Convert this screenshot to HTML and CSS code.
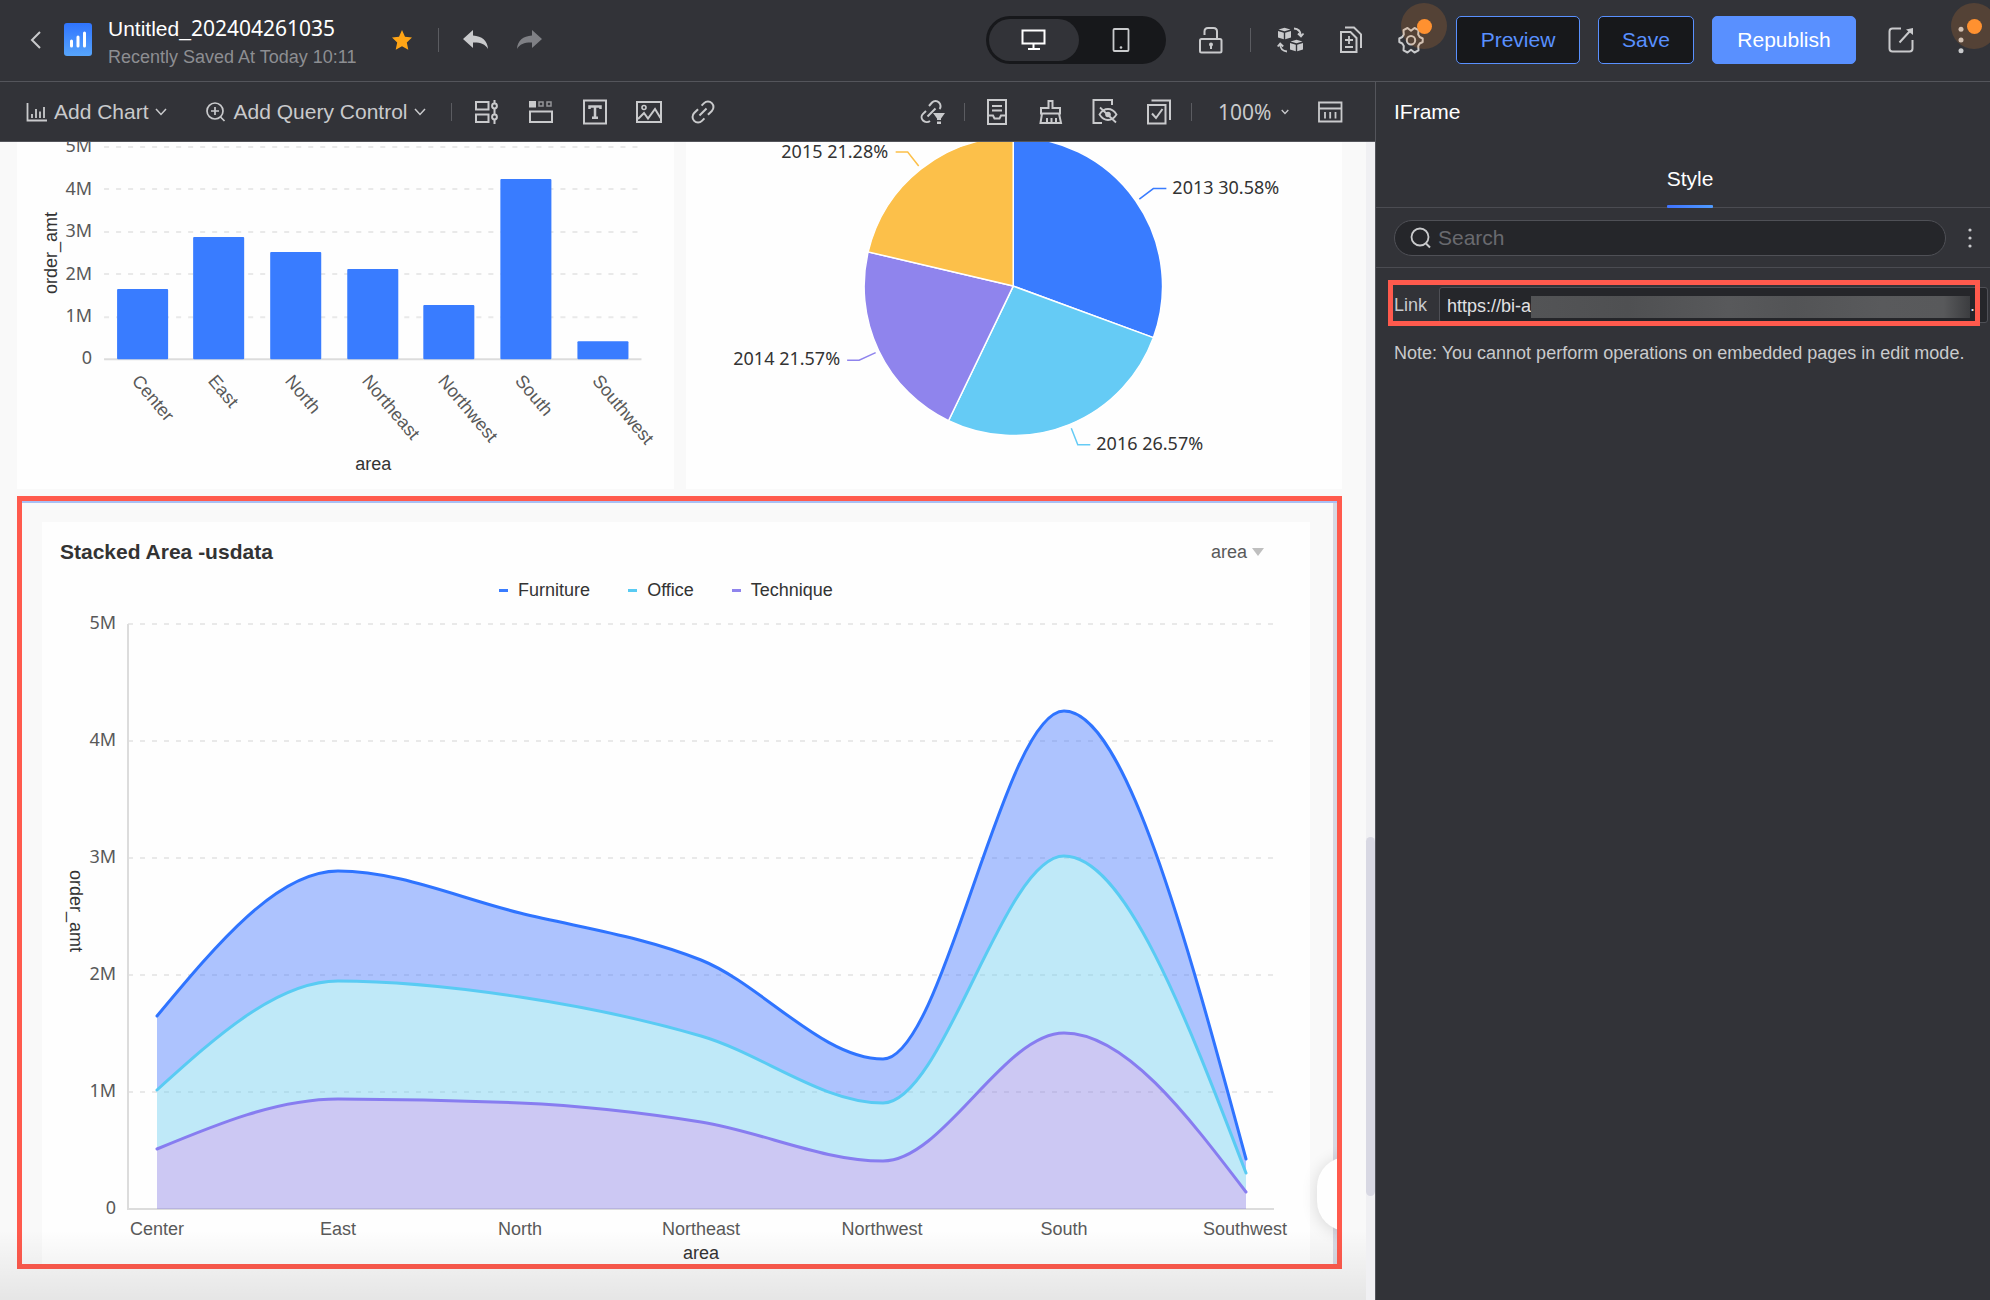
FILE: index.html
```html
<!DOCTYPE html>
<html lang="en">
<head>
<meta charset="utf-8">
<title>Untitled_202404261035</title>
<link rel="stylesheet" href="styles.css">
</head>
<body>
<div class="app">
  <header class="topbar">
    <button class="icon-btn back" aria-label="Back"><svg width="12" height="20" viewBox="0 0 12 20"><path d="M10 2 2 10l8 8" class="line"/></svg></button>
    <svg class="logo" width="28" height="34" viewBox="0 0 28 34" aria-hidden="true"><defs><linearGradient id="lg" x1="0" y1="0" x2="0" y2="1"><stop offset="0" stop-color="#2f74ff"/><stop offset="1" stop-color="#57a5fb"/></linearGradient></defs><rect width="28" height="33" rx="3" fill="url(#lg)"/><path d="M7.500 18v5M14 14v9M20.500 10v13" stroke="#fff" stroke-width="3" stroke-linecap="round"/></svg>
    <div class="doc">
      <h1 class="doc-name">Untitled_<span class="digits">202404261035</span></h1>
      <p class="doc-saved">Recently Saved At Today 10:11</p>
    </div>
    <button class="icon-btn star" aria-label="Favorite"><svg width="20" height="20" viewBox="0 0 20 20"><path d="M10 0l3 6.800 7 .8-5.200 4.900 1.500 7.200L10 16.300l-6.300 3.400 1.500-7.200L0 7.600l7-.8z" fill="#ffa516"/></svg></button>
    <span class="divider"></span>
    <button class="icon-btn undo" aria-label="Undo"><svg width="26" height="20" viewBox="0 0 26 20"><path d="M10 0v5.500c9 .5 14.500 5 15 13.500C22 14 17.500 12.300 10 12.500V18L0 9z" fill="#c9cacc"/></svg></button>
    <button class="icon-btn redo" aria-label="Redo"><svg width="26" height="20" viewBox="0 0 26 20"><path d="M15 0v5.500C6 6 .5 10.500 0 19c3-5 7.500-6.700 15-6.500V18l10-9z" fill="#7f8085"/></svg></button>

    <div class="device" role="group" aria-label="Layout">
      <button class="device-btn active" aria-label="Desktop"><svg width="26" height="22" viewBox="0 0 26 22"><path d="M1.500 1.500h22v13h-22zM12.500 15v4M7 20h12" fill="none" stroke="#fff"/></svg></button>
      <button class="device-btn" aria-label="Phone"><svg width="18" height="26" viewBox="0 0 18 26"><rect x="1.500" y="2" width="15" height="22" rx="1" class="line" stroke-width="1.800"/><circle cx="9" cy="20.500" r="1.300" class="solid"/></svg></button>
    </div>
    <button class="icon-btn lock" aria-label="Lock"><svg width="26" height="28" viewBox="0 0 26 28"><rect x="2" y="13" width="21.500" height="13.500" rx="1.500" class="line"/><path d="M6.500 9V5.500Q6.500 2 10 2h5.500Q19 2 19 5.500V13M13 20v3" class="line"/><circle cx="13" cy="18.500" r="2" class="solid"/></svg></button>
    <span class="divider d2"></span>
    <button class="icon-btn swap" aria-label="Swap component"><svg width="26" height="26" viewBox="0 0 26 26"><path d="M6.500.7l6 1.800-6 1.800-6-1.800zM0 4l5.800 1.800v6.400L0 10.400zM13 4 7.200 5.800v6.400L13 10.400zM18.500 12.700l6 1.800-6 1.800-6-1.800zM12 16l5.800 1.800v6.400L12 22.400zM25 16l-5.800 1.800v6.400L25 22.400z" class="solid"/><path d="M16 1.500c4 .3 6.700 3 7 7.500M9 24.500c-4-.3-6.700-3-7-7.500M20 6.500l3 3 2.500-3M-.3 19.500l2.500-3 3 3" class="line" stroke-width="1.800"/></svg></button>
    <button class="icon-btn" aria-label="Versions"><svg width="26" height="28" viewBox="0 0 26 28"><path d="M3 6h9.500l6 6v14H3zM7 1.500h9L23 8.300V22" class="line"/><path d="M11 10v8M7 14h8M7 21h8" class="line" stroke-width="1.800"/></svg></button>
    <button class="icon-btn badge" aria-label="Settings"><svg width="26" height="26" viewBox="0 0 26 26"><path d="M13 3.800 16.500 1l4 2.200-.3 4.300 1.500 2.500 3 1.500v3.500l-3 1.500-1.500 2.500.3 4.300-4 2.200-3.500-2.800L9.500 25.500l-4-2.200.3-4.300-1.500-2.500-3-1.500v-3.500l3-1.500 1.500-2.500-.3-4.300L9.500 1z" class="line" stroke-linejoin="round"/><circle cx="13" cy="13.200" r="4.200" class="line"/></svg></button>
    <button class="btn preview">Preview</button>
    <button class="btn save">Save</button>
    <button class="btn republish">Republish</button>
    <button class="icon-btn share" aria-label="Open"><svg width="26" height="26" viewBox="0 0 26 26"><path d="M13 1.500H4.500q-3 0-3 3v17q0 3 3 3h17q3 0 3-3V13M11.500 15.500 22 4" class="line"/><path d="M25 1v7l-7-5.500z" class="solid"/></svg></button>
    <button class="icon-btn badge more" aria-label="More"><svg width="26" height="26" viewBox="0 0 26 26"><g class="solid"><circle cx="13" cy="2.300" r="2.500"/><circle cx="13" cy="13" r="2.500"/><circle cx="13" cy="23.700" r="2.500"/></g></svg></button>
  </header>

  <nav class="toolbar">
    <button class="menu-btn"><svg width="22" height="20" viewBox="0 0 22 20"><path d="M1.500 1v17.500H21M6 16v-4M10 16V7M14 16V9.500M18 16V5" class="line" stroke-width="1.800"/></svg>Add Chart<svg class="caret" width="12" height="8" viewBox="0 0 12 8"><path d="M1 1l5 5.500L11 1" class="line" stroke-width="1.500"/></svg></button>
    <button class="menu-btn query"><svg width="22" height="22" viewBox="0 0 22 22"><circle cx="10" cy="10" r="8" class="line" stroke-width="1.700"/><path d="M10 6v8M6 10h8M15.500 16l4 4" class="line" stroke-width="1.700"/></svg>Add Query Control<svg class="caret" width="12" height="8" viewBox="0 0 12 8"><path d="M1 1l5 5.500L11 1" class="line" stroke-width="1.500"/></svg></button>
    <span class="divider short"></span>
    <div class="tools">
      <button class="icon-btn" aria-label="Filter group"><svg width="26" height="26" viewBox="0 0 26 26"><path d="M2 3h12.500v7.500H2zM2 15.500h12.500V23H2zM20.500 1v4M20.500 9v7M20.500 20v5" class="line"/><circle cx="20.500" cy="7" r="2.400" class="line"/><circle cx="20.500" cy="18" r="2.400" class="line"/></svg></button>
      <button class="icon-btn" aria-label="Tabs"><svg width="26" height="26" viewBox="0 0 26 26"><path d="M1 2h7v6.500H1z" class="solid"/><path d="M11 3h4v4h-4zM19 3h4v4h-4z" class="line" stroke-width="1.500" opacity=".65"/><path d="M2 12.500h22V23H2z" class="line"/></svg></button>
      <button class="icon-btn" aria-label="Text"><svg width="26" height="26" viewBox="0 0 26 26"><path d="M2 1.500h22v23H2z" class="line"/><path d="M7.500 10V7.500h11V10M13 7.500v11M10 18.800h6" class="line" stroke-width="2.500"/></svg></button>
      <button class="icon-btn" aria-label="Image"><svg width="26" height="26" viewBox="0 0 26 26"><path d="M1 3h24v20H1zM2 20l6-6 4 5.500L19 10l5.500 9" class="line"/><circle cx="8" cy="8.500" r="2" class="line" stroke-width="1.600"/></svg></button>
      <button class="icon-btn" aria-label="Embed page"><svg width="26" height="26" viewBox="0 0 26 26"><path d="M9.500 18.500H6a5.500 5.500 0 0 1 0-11h5.500M16.500 7.500H20a5.500 5.500 0 0 1 0 11h-5.500M8 13h10" class="line" transform="rotate(-45 13 13)"/></svg></button>
    </div>
    <div class="tools end">
      <button class="icon-btn" aria-label="Linkage"><svg width="26" height="26" viewBox="0 0 26 26"><path d="M11 22c-2 1.500-5 1.500-7-.5s-1.800-4.800 0-6.600L7 12M10 7l3-3.500c2-2 5-2 7 0s2 5 .5 6.500M8.500 17.500l8-8" class="line"/><path d="M14 14h12l-4 5.500V21h-4v-1.500zM18 22.500h4V25h-4z" class="solid"/></svg></button>
      <span class="divider short"></span>
      <button class="icon-btn" aria-label="Template"><svg width="26" height="26" viewBox="0 0 26 26"><path d="M4 .9h18v24H4zM4 16.500h5l1.500 3h5l1.500-3h5M8 7h10M8 11.500h10" class="line"/></svg></button>
      <button class="icon-btn" aria-label="Theme"><svg width="26" height="26" viewBox="0 0 26 26"><path d="M3 14.500V9h7.500V2h4v7H22v5.500zM4 14.500 2.500 24H23l-2-9.500M9 24v-5M13.500 24v-5M18 24v-5" class="line"/></svg></button>
      <button class="icon-btn" aria-label="Hidden items"><svg width="26" height="26" viewBox="0 0 26 26"><path d="M10 24H1.500V1H20v5" class="line"/><path d="M7.500 15.500Q11 10 16 10t8.500 5.500Q21 21 16 21t-8.500-5.500zM8 8.500l16 15" class="line" stroke-width="1.800"/><circle cx="16" cy="15.500" r="2.800" class="solid"/></svg></button>
      <button class="icon-btn" aria-label="Batch select"><svg width="26" height="26" viewBox="0 0 26 26"><path d="M2 6h17.500v18.500H2zM5.500 1.500H24V21M6 14.500l4 4.500 6.500-9" class="line"/></svg></button>
      <span class="divider short"></span>
      <span class="zoom"><select class="zoom-select" aria-label="Zoom"><option>100%</option></select><svg width="8" height="6" viewBox="0 0 8 6"><path d="M.7 1 4 4.500 7.300 1" class="line" stroke-width="1.300"/></svg></span>
      <button class="icon-btn" aria-label="Data panel"><svg width="26" height="26" viewBox="0 0 26 26"><path d="M2 3.500h22.500v19H2zM2 9.500h22.500M8 13v6.500M13.200 13v6.500M18.500 13v6.500" class="line" stroke-width="1.800"/></svg></button>
    </div>
  </nav>

  <main class="canvas">
    <div class="cards">
      <section class="card" aria-label="Bar chart">
        <svg class="chart" viewBox="17 142 656 347">
          <path class="grid" d="M104 147H641M104 189H641M104 232H641M104 274H641M104 317H641"/>
          <path class="axis" d="M104 359H641"/>
          <g fill="#397cff">
            <rect x="117" y="289" width="51" height="70" rx="1"/>
            <rect x="193" y="237" width="51" height="122" rx="1"/>
            <rect x="270" y="252" width="51" height="107" rx="1"/>
            <rect x="347" y="269" width="51" height="90" rx="1"/>
            <rect x="423" y="305" width="51" height="54" rx="1"/>
            <rect x="500" y="179" width="51" height="180" rx="1"/>
            <rect x="577" y="341" width="51" height="18" rx="1"/>
          </g>
          <g class="num" text-anchor="end">
            <text x="92" y="152">5M</text><text x="92" y="195">4M</text><text x="92" y="237">3M</text><text x="92" y="280">2M</text><text x="92" y="322">1M</text><text x="92" y="364">0</text>
          </g>
          <g class="cat">
            <text transform="translate(131 381) rotate(50)">Center</text>
            <text transform="translate(207 381) rotate(50)">East</text>
            <text transform="translate(284 381) rotate(50)">North</text>
            <text transform="translate(361 381) rotate(50)">Northeast</text>
            <text transform="translate(437 381) rotate(50)">Northwest</text>
            <text transform="translate(514 381) rotate(50)">South</text>
            <text transform="translate(591 381) rotate(50)">Southwest</text>
          </g>
          <g class="axis-name" text-anchor="middle">
            <text x="373" y="470">area</text>
            <text transform="translate(57 253) rotate(-90)">order_amt</text>
          </g>
        </svg>
      </section>
      <section class="card" aria-label="Pie chart">
        <svg class="chart" viewBox="686 142 656 347">
          <g stroke="#fff" stroke-width="1.500">
            <path fill="#397cff" d="M1013 286V137A149 149 0 0 1 1153 337.500z"/>
            <path fill="#65cbf5" d="M1013 286 1153 337.500A149 149 0 0 1 948.300 420.500z"/>
            <path fill="#8f84ed" d="M1013 286 948.300 420.500A149 149 0 0 1 868 251.800z"/>
            <path fill="#fcc04a" d="M1013 286 868 251.800A149 149 0 0 1 1013 137z"/>
          </g>
          <g fill="none" stroke-width="1.500">
            <path stroke="#397cff" d="M1139 199 1153 188.500H1166"/>
            <path stroke="#65cbf5" d="M1071 428 1077.500 444.500H1090"/>
            <path stroke="#8f84ed" d="M875.500 352.500 859 360H847"/>
            <path stroke="#fcc04a" d="M918.500 166 907.500 152H895.500"/>
          </g>
          <g class="num dark">
            <text x="1172" y="194">2013 30.58%</text>
            <text x="1096" y="450">2016 26.57%</text>
            <text x="840" y="365" text-anchor="end">2014 21.57%</text>
            <text x="888" y="158" text-anchor="end">2015 21.28%</text>
          </g>
        </svg>
      </section>
    </div>

    <section class="embed">
      <div class="embed-page">
        <div class="embed-head">
          <h2 class="embed-title">Stacked Area -usdata</h2>
          <span class="field"><select class="field-select" aria-label="Field"><option>area</option></select></span>
        </div>
        <ul class="legend">
          <li class="furniture">Furniture</li>
          <li class="office">Office</li>
          <li class="technique">Technique</li>
        </ul>
        <svg class="chart" id="area-chart" viewBox="42 606 1268 658">
          <path class="grid" d="M128 624H1274M128 741H1274M128 858H1274M128 975H1274M128 1092H1274"/>
          <path class="axis" d="M128 624V1209H1274"/>
          <g id="bands"></g>
          <g class="num" text-anchor="end">
            <text x="116" y="629">5M</text><text x="116" y="746">4M</text><text x="116" y="863">3M</text><text x="116" y="980">2M</text><text x="116" y="1097">1M</text><text x="116" y="1214">0</text>
          </g>
          <g class="cat" text-anchor="middle">
            <text x="157" y="1235">Center</text><text x="338" y="1235">East</text><text x="520" y="1235">North</text><text x="701" y="1235">Northeast</text><text x="882" y="1235">Northwest</text><text x="1064" y="1235">South</text><text x="1245" y="1235">Southwest</text>
          </g>
          <g class="axis-name" text-anchor="middle">
            <text x="701" y="1259">area</text>
            <text transform="translate(70 911) rotate(90)">order_amt</text>
          </g>
        </svg>
      </div>
      <span class="embed-scroll"></span>
      <span class="float-clip"><span class="float-tab"></span></span>
    </section>
    <span class="fade"></span>
    <span class="track"><span class="thumb"></span></span>
  </main>

  <aside class="panel">
    <h2 class="panel-title">IFrame</h2>
    <div class="tabs"><button class="tab">Style</button></div>
    <div class="search-row">
      <label class="search"><svg width="22" height="22" viewBox="0 0 22 22"><circle cx="10" cy="10" r="8.500" class="line" stroke-width="1.800"/><path d="M16 16.500l4 4" class="line"/></svg><input type="text" placeholder="Search" aria-label="Search"></label>
      <button class="icon-btn" aria-label="Options"><svg width="6" height="22" viewBox="0 0 6 22"><g class="solid"><circle cx="3" cy="3" r="1.600"/><circle cx="3" cy="11" r="1.600"/><circle cx="3" cy="19" r="1.600"/></g></svg></button>
    </div>
    <div class="link-row">
      <label for="link">Link</label>
      <span class="link-field"><input id="link" type="text" value="https://bi-a"><span class="mask"></span><span class="tail">.</span></span>
      <span class="highlight"></span>
    </div>
    <p class="note">Note: You cannot perform operations on embedded pages in edit mode.</p>
  </aside>
</div>
<script src="chart.js"></script>
</body>
</html>
```

FILE: styles.css
```css
* { box-sizing: border-box; }
body {
  margin: 0;
  background: #323338;
  color: #c9cacc;
  font-family: "Liberation Sans", Arial, sans-serif;
  font-size: 18px;
  overflow-x: hidden;
}
h1, h2, p, ul { margin: 0; padding: 0; font-weight: 400; }
button, input, select { font: inherit; color: inherit; }
button { background: none; border: 0; padding: 0; }
svg { display: block; stroke-width: 2; }
.line { fill: none; stroke: #c9cacc; }
.solid { fill: #c9cacc; }

.app {
  display: grid;
  grid-template-columns: minmax(0, 1fr) 615px;
  grid-template-rows: 82px 60px minmax(0, 1fr);
  min-height: 100vh;
}

/* top bar */
.topbar {
  grid-column: 1 / -1;
  display: flex;
  align-items: center;
  padding: 0 16px 2px 30px;
  border-bottom: 1px solid #54555b;
  overflow: hidden;
}
.icon-btn { display: flex; flex: none; align-items: center; justify-content: center; min-width: 26px; }
.icon-btn svg { overflow: visible; }
.back, .star { min-width: 0; }
.logo { flex: none; margin-left: 22px; }
.doc { width: 252px; margin-left: 16px; padding-top: 6px; white-space: nowrap; }
.doc-name { font-size: 21px; line-height: 28px; color: #fff; }
.digits { font-family: "Noto Sans", sans-serif; line-height: 1; }
.doc-saved { font-size: 18px; line-height: 28px; color: #8d8e92; }
.star { margin-left: 32px; }
.divider { flex: none; width: 1px; height: 24px; background: #5b5c61; }
.star + .divider { margin-left: 26px; }
.divider.short { height: 18px; }
.undo { margin-left: 24px; }
.redo { margin-left: 28px; }
.device { display: flex; flex: none; width: 180px; height: 48px; margin-left: auto; padding: 3px; border-radius: 24px; background: #17181b; }
.device-btn { display: flex; flex: 1; align-items: center; justify-content: center; border-radius: 21px; }
.device-btn.active { flex: 0 0 90px; background: #323338; }
.lock { margin-left: 32px; }
.divider.d2 { margin-left: 26px; }
.swap { margin: 0 34px 0 27px; }
.badge { position: relative; margin-left: 34px; }
.badge::before, .badge::after { content: ""; position: absolute; border-radius: 50%; }
.badge::before { left: 3px; top: -24px; width: 46px; height: 46px; background: rgba(255, 145, 50, .17); }
.badge::after { left: 19px; top: -8px; width: 15px; height: 15px; background: #ff9130; }
.btn { flex: none; height: 48px; border: 1px solid #5990ff; border-radius: 5px; background: #17181b; color: #5990ff; font-size: 21px; }
.preview { width: 124px; margin-left: 32px; }
.save { width: 96px; margin-left: 18px; }
.republish { width: 144px; margin-left: 18px; background: #5990ff; color: #fff; }
.share { margin-left: 32px; }

/* tool bar */
.toolbar { display: flex; align-items: center; padding: 0 32px 0 26px; border-bottom: 1px solid #54555b; }
.menu-btn { display: flex; flex: none; align-items: center; font-size: 21px; gap: 6px; white-space: nowrap; }
.query { gap: 7px; margin: 0 25px 0 38px; }
.tools { display: flex; align-items: center; gap: 28px; margin-left: 22px; }
.tools.end { margin-left: auto; }
.tools.end .divider { margin: 0 -9px; }
.zoom { display: flex; align-items: center; gap: 9px; margin-left: 7px; }
.zoom-select { appearance: none; border: 0; padding: 0; background: none; font-family: "Noto Sans", sans-serif; font-size: 21px; line-height: 28px; }

/* canvas */
.canvas { position: relative; padding: 0 33px 31px 17px; background: #f9f9f9; overflow: hidden; }
.cards { display: grid; grid-template-columns: 1fr 1fr; gap: 12px; margin-bottom: 7px; }
.card { background: #fefefe; }
.chart { width: 100%; height: auto; }
.grid { fill: none; stroke: #e9e9e9; stroke-dasharray: 5 7; }
.axis { fill: none; stroke: #dcdcdc; }
.num { font-family: "Noto Sans", sans-serif; font-size: 18px; fill: #595959; }
.num.dark { fill: #333; }
.cat { font-size: 18px; fill: #595959; }
.axis-name { font-size: 18px; fill: #333; }

.embed { position: relative; padding: 21px 27px 0 20px; border: 5px solid #ff5a4d; background: #f9f9f9; box-shadow: inset 0 2px #a9c0f5; }
.embed-page { background: #fefefe; }
.embed-head { display: flex; align-items: center; justify-content: space-between; padding: 18px 46px 0 18px; }
.embed-title { font-size: 21px; line-height: 24px; font-weight: 700; color: #333; }
.field { display: flex; align-items: center; gap: 4px; color: #595959; }
.field::after { content: ""; border: 6px solid transparent; border-top: 8px solid #bfbfbf; border-bottom: 0; }
.field-select { appearance: none; border: 0; padding: 0; background: none; line-height: 24px; }
.legend { display: flex; justify-content: center; gap: 38px; margin: 16px 20px 6px 0; list-style: none; line-height: 20px; color: #333; }
.legend li { display: flex; align-items: center; gap: 10px; }
.legend li::before { content: ""; width: 9px; height: 3px; background: currentColor; }
.furniture::before { color: #397cff; }
.office::before { color: #59cbf3; }
.technique::before { color: #8f84ed; }
.embed-scroll { position: absolute; top: 2px; right: 0; bottom: 0; width: 4px; background: #d8d9e3; }
.float-clip { position: absolute; right: 0; bottom: 0; width: 60px; height: 140px; overflow: hidden; }
.float-tab { position: absolute; right: -54px; bottom: 33px; width: 74px; height: 74px; border-radius: 30px; background: #fefefe; box-shadow: 0 2px 16px rgba(0, 0, 0, .14); }
.fade { position: absolute; left: 0; right: 0; bottom: 0; height: 70px; background: linear-gradient(rgba(0, 0, 0, 0), rgba(0, 0, 0, .08)); pointer-events: none; }
.track { position: absolute; top: 0; right: 0; bottom: 0; width: 9px; background: #f0f0f3; }
.thumb { position: absolute; top: 60%; left: 0; right: 0; height: 31%; border-radius: 5px; background: #d8d8e3; }

/* series */
.band { fill-opacity: .4; }
.series { fill: none; stroke-width: 3; stroke-linecap: round; }

/* side panel */
.panel { grid-column: 2; grid-row: 2 / 4; border-left: 1px solid #54555b; }
.panel-title { padding: 18px; font-size: 21px; line-height: 24px; color: #fff; }
.tabs { display: flex; justify-content: center; height: 66px; padding-left: 14px; border-bottom: 1px solid #4b4c52; }
.tab { position: relative; height: 66px; padding-top: 8px; font-size: 21px; color: #fff; }
.tab::after { content: ""; position: absolute; left: 0; right: 0; bottom: 0; height: 3px; border-radius: 1px; background: linear-gradient(90deg, #3f73ff, #4f9bff); }
.search-row { display: flex; align-items: center; gap: 11px; height: 60px; padding: 0 7px 0 18px; border-bottom: 1px solid #4b4c52; }
.search { display: flex; flex: 1; align-items: center; gap: 6px; height: 36px; padding: 0 15px; border: 1px solid #4f5056; border-radius: 18px; background: #25262a; }
.search input { flex: 1; min-width: 0; border: 0; padding: 0; background: none; font-size: 21px; outline: 0; }
.search input::placeholder { color: #696a6f; opacity: 1; }
.link-row { position: relative; display: flex; align-items: center; gap: 11px; margin-top: 19px; padding: 0 2px 0 18px; color: #c9cacc; }
.link-row label { width: 34px; }
.link-field { position: relative; flex: 1; }
.link-field input { display: block; width: 100%; height: 36px; padding: 2px 7px 0; border: 1px solid #4f5056; border-radius: 3px; background: #25262a; color: #e1e1e3; }
.mask { position: absolute; left: 92px; right: 18px; top: 9px; height: 22px; background: linear-gradient(90deg, #535456, #4f5052 22%, #58595b 45%, #535456 60%, #595a5c 80%, #58595b 94%, #3c3d40); }
.tail { position: absolute; right: 13px; top: 8px; line-height: 20px; color: #e1e1e3; }
.highlight { position: absolute; left: 12px; right: 10px; top: -7px; bottom: -3px; border: 5px solid #ff5a4d; }
.note { margin-top: 18px; padding-left: 18px; line-height: 24px; white-space: nowrap; }
```

FILE: chart.js
```js
// Stacked bands, drawn with a monotone cubic; each series holds its band's top edge.
const xs = [157, 338, 520, 701, 883, 1064, 1246];
const base = 1209;
const series = [
  { fill: '#346bff', stroke: '#2f74ff', ys: [1016, 871, 913, 960, 1059, 711, 1159] },
  { fill: '#61caf0', stroke: '#59cbf3', ys: [1090, 981, 997, 1036, 1103, 856, 1173] },
  { fill: '#8278e3', stroke: '#877df0', ys: [1149, 1099, 1103, 1122, 1161, 1033, 1192] }
];

function handles(pts) {
  const n = pts.length;
  const slope = pts.slice(1).map((p, i) => (p[1] - pts[i][1]) / (p[0] - pts[i][0]));
  const m = pts.map((p, i) => {
    if (i === 0 || i === n - 1) return 0;
    const a = slope[i - 1], b = slope[i];
    const mean = Math.abs((a + b) / 2) / 2;
    return (Math.sign(a) + Math.sign(b)) * Math.min(Math.abs(a), Math.abs(b), mean);
  });
  m[0] = (3 * slope[0] - m[1]) / 2;
  m[n - 1] = (3 * slope[n - 2] - m[n - 2]) / 2;
  return pts.map((p, i) => {
    const l = i ? (p[0] - pts[i - 1][0]) / 3 : 0;
    const r = i < n - 1 ? (pts[i + 1][0] - p[0]) / 3 : 0;
    return { before: [p[0] - l, p[1] - l * m[i]], after: [p[0] + r, p[1] + r * m[i]] };
  });
}

function forward(pts, h) {
  return pts.slice(1).map((p, i) => 'C' + [h[i].after, h[i + 1].before, p].join(' ')).join('');
}

function backward(pts, h) {
  let d = '';
  for (let i = pts.length - 1; i > 0; i--) d += 'C' + [h[i].before, h[i - 1].after, pts[i - 1]].join(' ');
  return d;
}

function add(cls, attrs) {
  const el = document.createElementNS('http://www.w3.org/2000/svg', 'path');
  el.setAttribute('class', cls);
  for (const k in attrs) el.setAttribute(k, attrs[k]);
  document.getElementById('bands').appendChild(el);
}

const curves = series.map(s => {
  const pts = s.ys.map((y, i) => [xs[i], y]);
  return { pts, h: handles(pts) };
});

series.forEach((s, i) => {
  const { pts, h } = curves[i];
  const low = curves[i + 1];
  const last = xs.length - 1;
  const bottom = low
    ? 'L' + low.pts[last] + backward(low.pts, low.h)
    : 'L' + xs[last] + ' ' + base + 'L' + xs[0] + ' ' + base;
  add('band', { fill: s.fill, d: 'M' + pts[0] + forward(pts, h) + bottom + 'Z' });
});
series.forEach((s, i) => {
  const { pts, h } = curves[i];
  add('series', { stroke: s.stroke, d: 'M' + pts[0] + forward(pts, h) });
});
```
